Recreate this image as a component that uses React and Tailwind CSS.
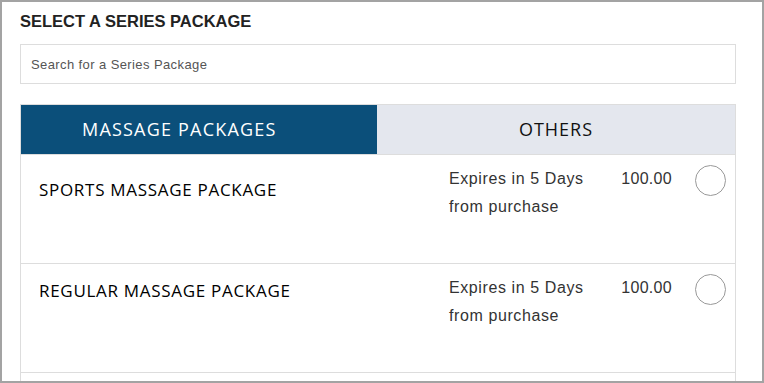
const packages = [
  { name: "SPORTS MASSAGE PACKAGE", expires: "Expires in 5 Days from purchase", price: "100.00", offset: "pt-[13px]" },
  { name: "REGULAR MASSAGE PACKAGE", expires: "Expires in 5 Days from purchase", price: "100.00", offset: "pt-[5px]" },
  { name: "", expires: "", price: "", offset: "" },
];

function PackageRow({ pkg }) {
  return (
    <div className="flex h-[109px] border-b border-[#dddddd] pt-[10px]">
      <div className={"flex-1 pl-[18px] font-['Open_Sans',sans-serif] text-[17px] leading-[24px] tracking-[0.7px] text-black " + pkg.offset}>
        {pkg.name}
      </div>
      <div className="w-[171px] pr-[20px] font-['Liberation_Sans',sans-serif] text-[16px] leading-[28px] tracking-[0.6px] text-[#333]">
        {pkg.expires}
      </div>
      <div className="w-[52px] text-right font-['Liberation_Sans',sans-serif] text-[16px] leading-[28px] tracking-[0.3px] text-[#333]">
        {pkg.price}
      </div>
      <div className="ml-[23px] mr-[9px] w-[31px]">
        {pkg.name && <div className="h-[31px] w-[31px] rounded-full border border-[#999999]" />}
      </div>
    </div>
  );
}

export default function App() {
  return (
    <div className="h-[383px] w-[764px] overflow-hidden border-2 border-[#a3a3a3] bg-white">
      <div className="px-[18px] pt-[9px]">
        <h2 className="font-['Liberation_Sans',sans-serif] text-[16.5px] font-bold leading-[20px] text-[#222]">
          SELECT A SERIES PACKAGE
        </h2>
        <input
          className="mt-[13px] block h-[40px] w-[716px] border border-[#dddddd] px-[10px] font-['Liberation_Sans',sans-serif] text-[13px] tracking-[0.4px] text-[#555] placeholder:text-[#555] outline-none"
          placeholder="Search for a Series Package"
        />
        <div className="mt-[20px] w-[716px] border-x border-t border-[#dddddd]">
          <div className="flex h-[50px] border-b border-[#dddddd]">
            <div className="flex w-[356px] items-center bg-[#0b4f7a] pl-[61px] font-['Open_Sans',sans-serif] text-[18px] tracking-[1.2px] text-white">
              MASSAGE PACKAGES
            </div>
            <div className="flex flex-1 items-center justify-center bg-[#e4e7ee] font-['Open_Sans',sans-serif] text-[18px] tracking-[1px] text-[#111]">
              OTHERS
            </div>
          </div>
          {packages.map((pkg, i) => (
            <PackageRow key={i} pkg={pkg} />
          ))}
        </div>
      </div>
    </div>
  );
}
